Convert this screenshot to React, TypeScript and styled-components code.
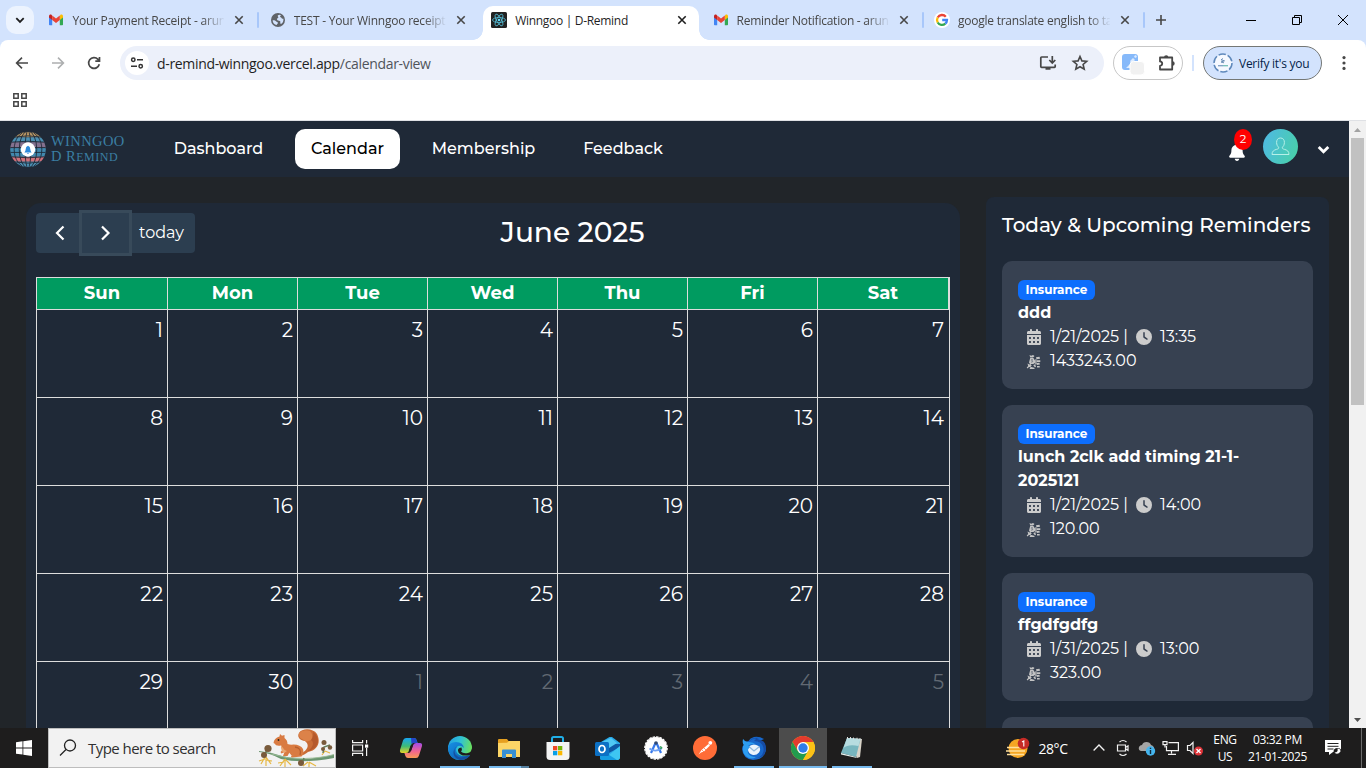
import React from "react";
import styled, { createGlobalStyle, css } from "styled-components";
import { FaBell, FaCalendarDays, FaClock } from "react-icons/fa6";

const GlobalStyle = createGlobalStyle`
  *, *::before, *::after { box-sizing: border-box; }
  body { margin: 0; overflow: hidden; background: #212529; }
  svg { display: block; flex: none; }
`;

const brandFont = `Montserrat, Inter, "Liberation Sans", sans-serif`;
const systemFont = `"Segoe UI", "Open Sans", "Noto Sans", sans-serif`;

const Screen = styled.div`
  width: 1366px;
  height: 768px;
  display: flex;
  flex-direction: column;
  overflow: hidden;
  font-family: ${systemFont};
`;

/* ---------- browser ---------- */

const TabStrip = styled.div`
  height: 40px;
  flex: none;
  background: #d3e3fd;
  display: flex;
  align-items: flex-end;
  padding-left: 6px;
`;

const TabSearch = styled.div`
  width: 28px;
  height: 28px;
  margin: 0 6.4px 6px 0;
  border-radius: 10px;
  background: #ecf3fe;
  display: grid;
  place-items: center;
`;

const Tab = styled.div<{ $active?: boolean }>`
  position: relative;
  width: 215px;
  height: 34px;
  margin-right: 6.4px;
  padding: 0 8px 6px 8px;
  display: flex;
  align-items: center;
  flex: none;
  border-radius: 10px 10px 0 0;
  color: ${(p) => (p.$active ? "#1f1f1f" : "#474747")};
  ${(p) =>
    p.$active &&
    css`
      width: 215.6px;
      margin-right: 5.8px;
      background: #fff;
      &::before, &::after {
        content: "";
        position: absolute;
        bottom: 0;
        width: 10px;
        height: 10px;
      }
      &::before { left: -10px; background: radial-gradient(circle at 0 0, transparent 9.5px, #fff 10px); }
      &::after { right: -10px; background: radial-gradient(circle at 100% 0, transparent 9.5px, #fff 10px); }
    `}
`;

const TabTitle = styled.div<{ $tracking?: number; $fade?: boolean }>`
  width: 152px;
  margin: 1px 7px 0 8px;
  font-size: 12px;
  line-height: 16px;
  white-space: nowrap;
  overflow: hidden;
  letter-spacing: ${(p) => p.$tracking ?? 0}px;
  ${(p) => p.$fade && css`mask-image: linear-gradient(90deg, #000 130px, transparent 153px);`}
`;

const TabDivider = styled.div`
  position: absolute;
  right: -4px;
  top: 6px;
  width: 2px;
  height: 16px;
  border-radius: 1px;
  background: #a8c7fa;
`;

const StripButton = styled.div<{ $w: number }>`
  width: ${(p) => p.$w}px;
  height: 40px;
  display: grid;
  place-items: center;
`;

const WindowButtons = styled.div`
  display: flex;
  margin-left: auto;
`;

const ToolbarBack = styled.div`
  background: #d3e3fd;
  flex: none;
`;

const Toolbar = styled.div`
  height: 46px;
  background: #fff;
  border-radius: 8px 8px 0 0;
  display: flex;
  align-items: center;
  padding-left: 4px;
`;

const NavIcon = styled.div<{ $w?: number }>`
  width: ${(p) => p.$w ?? 36}px;
  display: grid;
  place-items: center;
`;

const AddressBar = styled.div`
  width: 984px;
  flex: none;
  height: 34px;
  margin-left: 8px;
  padding: 0 15px 0 5px;
  border-radius: 17px;
  background: #ecf0fa;
  display: flex;
  align-items: center;
`;

const SiteInfo = styled.div`
  width: 24px;
  height: 24px;
  border-radius: 50%;
  background: #fff;
  display: grid;
  place-items: center;
`;

const Address = styled.div`
  flex: 1;
  margin-left: 8px;
  font-size: 14px;
  letter-spacing: -0.33px;
  color: #1f1f1f;
  span { color: #50545a; }
`;

const AddressActions = styled.div`
  display: flex;
  gap: 14px;
`;

const ExtensionPill = styled.div`
  width: 70px;
  flex: none;
  height: 34px;
  margin-left: 9px;
  padding: 0 6px 0 8px;
  border: 1px solid #c7c7c7;
  border-radius: 17px;
  display: flex;
  align-items: center;
  justify-content: space-between;
`;

const ToolbarDivider = styled.div`
  width: 2px;
  height: 16px;
  margin: 0 9px 0 9px;
  background: #d3e3fd;
`;

const VerifyButton = styled.div`
  width: 119px;
  flex: none;
  height: 34px;
  border: 1px solid #747775;
  border-radius: 17px;
  background: #d3e3fd;
  color: #041e49;
  display: flex;
  align-items: center;
  padding-left: 9px;
  gap: 6px;
  font-size: 12px;
  letter-spacing: -0.27px;
  white-space: nowrap;
`;

const BookmarkBar = styled.div`
  height: 35px;
  flex: none;
  background: #fff;
  border-bottom: 1px solid #dfe1e5;
  padding: 7px 0 0 13px;
`;

/* ---------- web page ---------- */

const Viewport = styled.div`
  height: 607px;
  flex: none;
  display: flex;
  overflow: hidden;
`;

const Page = styled.div`
  width: 1349px;
  height: 607px;
  overflow: hidden;
  background: #212529;
  font-family: ${brandFont};
  color: #fff;
`;

const Header = styled.header`
  height: 56px;
  background: #1f2937;
  display: flex;
  align-items: center;
  padding-left: 10px;
`;

const Brand = styled.div`
  width: 148px;
  display: flex;
  align-items: center;
  gap: 5px;
`;

const BrandName = styled.div`
  font-family: "Liberation Serif", serif;
  font-size: 14.5px;
  line-height: 15px;
  color: #3b7fa3;
  white-space: nowrap;
`;

const BrandLine = styled.div<{ $tracking: number }>`
  letter-spacing: ${(p) => p.$tracking}px;
  small { font-size: 12px; }
`;

const NavLink = styled.div<{ $active?: boolean; $w: number }>`
  width: ${(p) => p.$w}px;
  height: 40px;
  margin-right: 16px;
  padding-bottom: 1px;
  border-radius: 10px;
  display: flex;
  align-items: center;
  justify-content: center;
  white-space: nowrap;
  font-size: 16px;
  font-weight: 500;
  background: ${(p) => (p.$active ? "#fff" : "transparent")};
  color: ${(p) => (p.$active ? "#000" : "#fff")};
`;

const UserTools = styled.div`
  margin-left: auto;
  height: 56px;
  display: flex;
  padding: 8px 19px 0 0;
`;

const BellWrap = styled.div`
  position: relative;
  width: 18px;
  margin: 14px 17px 0 0;
`;

const BellCount = styled.div`
  position: absolute;
  left: 6px;
  top: -14px;
  width: 18px;
  height: 21px;
  border-radius: 50%;
  background: #f00;
  font-size: 11.5px;
  line-height: 21px;
  text-align: center;
`;

const Avatar = styled.div`
  width: 35px;
  height: 35px;
  border-radius: 50%;
  background: linear-gradient(110deg, #4fb8e6, #48d2a4);
  display: grid;
  place-items: center;
  margin-right: 19px;
`;

const MenuArrow = styled.div`
  padding-top: 14px;
`;

const Main = styled.main`
  display: flex;
  align-items: flex-start;
  padding-left: 26px;
`;

const CalendarPanel = styled.section`
  width: 934px;
  height: 700px;
  margin-top: 26px;
  padding: 10px;
  border-radius: 15px;
  background: #1f2937;
`;

const CalendarToolbar = styled.div`
  height: 40px;
  display: grid;
  grid-template-columns: 159px 1fr;
  align-items: center;
`;

const ButtonGroup = styled.div`
  display: flex;
`;

const CalButton = styled.div<{ $w: number; $round?: string; $focused?: boolean }>`
  width: ${(p) => p.$w}px;
  height: 40px;
  padding: 0 1px 1px 0;
  display: flex;
  align-items: center;
  justify-content: center;
  background: #2c3e50;
  border-radius: ${(p) => p.$round ?? "0"};
  font-size: 16px;
  ${(p) => p.$focused && css`position: relative; box-shadow: 0 0 0 3px #384a5a;`}
`;

const MonthTitle = styled.h2`
  margin: 0;
  padding-bottom: 2px;
  text-align: center;
  font-size: 28px;
  font-weight: 500;
  line-height: 34px;
`;

const MonthGrid = styled.div`
  margin-top: 24px;
  display: grid;
  grid-template-columns: 131px repeat(5, 130px) 132px;
  border-left: 1px solid #ddd;
  width: 914px;
`;

const DayName = styled.div`
  height: 33px;
  border: solid #ddd;
  border-width: 1px 1px 1px 0;
  background: #009b60;
  display: flex;
  align-items: center;
  justify-content: center;
  font-size: 18px;
  font-weight: 700;
  padding-bottom: 2px;
  &:nth-child(7) { border-right-width: 2px; }
`;

const DayCell = styled.div<{ $muted?: boolean }>`
  height: 88px;
  border: solid #ddd;
  border-width: 0 1px 1px 0;
  padding: 8px 4px 0 0;
  text-align: right;
  font-size: 20px;
  line-height: 24px;
  color: ${(p) => (p.$muted ? "#626973" : "#fff")};
  &:nth-child(7n) { padding-right: 5px; }
`;

const Reminders = styled.aside`
  width: 343px;
  height: 700px;
  margin: 20px 0 0 26px;
  padding: 16px;
  border-radius: 8px;
  background: #1f2937;
`;

const RemindersTitle = styled.h5`
  margin: 0 0 24px;
  font-size: 20px;
  font-weight: 500;
  line-height: 24px;
  white-space: nowrap;
`;

const ReminderCard = styled.div`
  width: 311px;
  padding: 16px;
  margin-bottom: 16px;
  border-radius: 10px;
  background: #374151;
  font-size: 16px;
  line-height: 24px;
`;

const BadgeLine = styled.div`
  height: 24px;
  padding-top: 3px;
`;

const Badge = styled.div`
  width: 77px;
  height: 20px;
  border-radius: 6px;
  background: #0d6efd;
  font-size: 12px;
  font-weight: 700;
  line-height: 20px;
  text-align: center;
`;

const ReminderName = styled.div`
  font-weight: 700;
  white-space: pre-line;
`;

const ReminderMeta = styled.div`
  height: 24px;
  display: flex;
  align-items: center;
  padding-left: 8px;
  white-space: nowrap;
`;

const MetaIcon = styled.span<{ $left?: number; $low?: boolean }>`
  width: 16px;
  margin: ${(p) => (p.$low ? 2 : 0)}px 8px 0 ${(p) => p.$left ?? 0}px;
  display: grid;
  place-items: center;
  color: #ccc;
`;

const Scrollbar = styled.div`
  width: 17px;
  background: #f1f1f1;
  display: flex;
  flex-direction: column;
  align-items: center;
`;

const ScrollArrow = styled.div`
  height: 17px;
  display: grid;
  place-items: center;
`;

const ScrollThumb = styled.div`
  width: 13px;
  height: 267px;
  background: #c1c1c1;
  margin-bottom: auto;
`;

/* ---------- taskbar ---------- */

const Taskbar = styled.div`
  height: 40px;
  flex: none;
  background: #1e1d1d;
  display: flex;
  color: #fff;
`;

const TaskSlot = styled.div<{ $w?: number; $active?: boolean; $ml?: number }>`
  position: relative;
  width: ${(p) => p.$w ?? 48}px;
  height: 40px;
  margin-left: ${(p) => p.$ml ?? 0}px;
  display: grid;
  place-items: center;
  background: ${(p) => (p.$active ? "#4c4c4c" : "transparent")};
`;

const RunningBar = styled.div<{ $w?: number; $split?: boolean }>`
  position: absolute;
  bottom: 0;
  left: 50%;
  width: ${(p) => p.$w ?? 40}px;
  height: 2px;
  transform: translateX(-50%);
  background: ${(p) => (p.$split ? "linear-gradient(90deg, #76b9ed 32px, #557f9e 32px)" : "#76b9ed")};
`;

const SearchBox = styled.div`
  width: 288px;
  height: 40px;
  border: 1px solid #bdbdbd;
  background: #f2f2f2;
  color: #303030;
  display: flex;
  align-items: center;
  padding-left: 10px;
  overflow: hidden;
`;

const SearchText = styled.div`
  flex: 1;
  margin-left: 11px;
  font-size: 15px;
  letter-spacing: -0.54px;
  white-space: nowrap;
`;

const Tray = styled.div`
  margin-left: auto;
  display: flex;
  align-items: center;
`;

const TrayText = styled.div<{ $w: number; $size?: number; $tracking?: number }>`
  width: ${(p) => p.$w}px;
  text-align: center;
  font-size: ${(p) => p.$size ?? 12}px;
  line-height: 17px;
  letter-spacing: ${(p) => p.$tracking ?? -0.37}px;
  white-space: nowrap;
`;

const ShowDesktop = styled.div`
  width: 5px;
  height: 40px;
  margin-left: 7px;
  border-left: 1px solid #6b6b6b;
`;

/* ---------- icons ---------- */

const GmailIcon = () => (
  <svg width="16" height="16" viewBox="0 0 16 16">
    <path d="M1 4.2V12.5q0 .8.8.8H4.2V7z" fill="#4285f4" />
    <path d="M15 4.2V12.5q0 .8-.8.8H11.8V7z" fill="#34a853" />
    <path d="M11.8 4v4L15 5.6V4.2C15 2.6 13.3 2.2 12.3 3z" fill="#fbbc04" />
    <path d="M4.2 4v4L1 5.6V4.2C1 2.6 2.7 2.2 3.7 3z" fill="#c5221f" />
    <path d="M4.2 3.4L8 6.4l3.8-3V8L8 10.9 4.2 8z" fill="#ea4335" />
  </svg>
);

const GlobeIcon = () => (
  <svg width="16" height="16" viewBox="0 0 16 16">
    <circle cx="8" cy="8" r="7" fill="#5f6368" />
    <path d="M2.6 8.3c1.7-.1 3 .3 3.6 1.2.4.7 1.6.3 1.7 1.4 0 .9-1.2.8-1.2 2.2-2.4-.4-4-2.3-4.1-4.8zM8 3.2c1-.8 2.4-.7 3.3 0-.7.5-1.2.6-1.2 1.3 0 .8 1 .6 1.3 1.3.3.9 1.3 1 2 .9.3 2.1-.6 4-2 5.1-.8.3-1.4-.4-1.1-1.3.3-1-.2-1.6-1.3-1.7C7.600 8.700 7 8.200 7 7.300 7 6 8.600 6.200 8.300 5.100 8.100 4.500 7.300 4 8 3.200z" fill="#d3e3fd" />
  </svg>
);

const ReactIcon = () => (
  <svg width="16" height="16" viewBox="0 0 16 16">
    <rect width="16" height="16" rx="1.5" fill="#222" />
    <g fill="none" stroke="#55bfd8" strokeWidth=".8">
      <ellipse cx="8" cy="8" rx="6.5" ry="2.5" />
      <ellipse cx="8" cy="8" rx="6.5" ry="2.5" transform="rotate(60 8 8)" />
      <ellipse cx="8" cy="8" rx="6.5" ry="2.5" transform="rotate(120 8 8)" />
    </g>
    <circle cx="8" cy="8" r="1.3" fill="#61dafb" />
  </svg>
);

const GoogleIcon = () => (
  <svg width="16" height="16" viewBox="0 0 16 16">
    <circle cx="8" cy="8" r="8" fill="#fff" />
    <g fill="none" strokeWidth="2.3">
      <path d="M11.800 4.700A5 5 0 0 0 3.700 5.500" stroke="#ea4335" />
      <path d="M3.700 5.500a5 5 0 0 0 0 5" stroke="#fbbc05" />
      <path d="M3.700 10.500a5 5 0 0 0 7.600 1.200" stroke="#34a853" />
      <path d="M11.300 11.700A5 5 0 0 0 13 8H8.200" stroke="#4285f4" />
    </g>
  </svg>
);

const CloseGlyph = ({ dark }: { dark?: boolean }) => (
  <svg width="16" height="16" viewBox="0 0 16 16" stroke={dark ? "#1f1f1f" : "#474747"} strokeWidth="1.6">
    <path d="M4.300 4.300l7.400 7.400M11.700 4.300l-7.400 7.400" />
  </svg>
);

const BackArrow = ({ flip }: { flip?: boolean }) => (
  <svg width="16" height="16" viewBox="0 0 16 16" fill="none" stroke={flip ? "#adafb0" : "#474747"} strokeWidth="1.6" transform={flip ? "scale(-1 1)" : undefined}>
    <path d="M14 8H3M8 2.600L2.600 8 8 13.400" />
  </svg>
);

const ReloadIcon = () => (
  <svg width="16" height="16" viewBox="0 0 16 16" fill="none" stroke="#474747" strokeWidth="1.7">
    <path d="M13.300 9.300A5.400 5.400 0 1 1 12 4.300l1.500 1.600M13.500 2v4.200H9.300" />
  </svg>
);

const TuneIcon = () => (
  <svg width="14" height="14" viewBox="0 0 14 14" fill="none" stroke="#333" strokeWidth="1.500">
    <circle cx="3.300" cy="3.800" r="1.700" />
    <path d="M7 3.800h6M1 10.200h6" />
    <circle cx="10.700" cy="10.200" r="1.700" />
  </svg>
);

const InstallIcon = () => (
  <svg width="18" height="18" viewBox="0 0 18 18" fill="none" stroke="#474747" strokeWidth="1.700">
    <path d="M9 3H2.600Q1.800 3 1.800 3.800V12.500q0 .8.8.8H15.400q.8 0 .8-.8V10.500M6.500 15h5M13.300 2v6.500M10.300 6l3 3 3-3" />
  </svg>
);

const StarIcon = () => (
  <svg width="18" height="18" viewBox="0 0 18 18" fill="none" stroke="#474747" strokeWidth="1.600">
    <path d="M9 2.500l1.900 4.400 4.800.4-3.600 3.200 1.100 4.700L9 12.700l-4.200 2.500 1.100-4.700L2.300 7.300l4.800-.4z" />
  </svg>
);

const ExtensionApp = () => (
  <svg width="24" height="24" viewBox="0 0 24 24">
    <rect x="0" y="3" width="16" height="16" rx="3" fill="#86b9fa" />
    <path d="M4 17l5-5-1-2 3-3 2 2-3 3 2 5zM12 5l2-1 1 2-2 1z" fill="#dcebff" />
    <rect x="8" y="10.500" width="14.500" height="13.500" rx="3.500" fill="#f1f1f1" stroke="#fff" />
  </svg>
);

const PuzzleIcon = () => (
  <svg width="18" height="18" viewBox="0 0 18 18">
    <path d="M2 3.500h12.200v12H2v-3.700q2.200-.2 2.200-2.200T2 7.400z" fill="none" stroke="#474747" strokeWidth="1.800" strokeLinejoin="round" />
    <path d="M6 3.500a2.200 2.200 0 0 1 4.400 0zM14.500 7.300a2.200 2.200 0 0 1 0 4.400z" fill="#474747" />
  </svg>
);

const ProfileRing = () => (
  <svg width="20" height="20" viewBox="0 0 20 20">
    <circle cx="10" cy="10" r="9" fill="#f6f9ff" stroke="#5f89bc" strokeWidth="1.500" strokeDasharray="7.400 2" />
    <path d="M10 5.500l-2 1.300 3.500 1-3.500 1.200 3 .8" fill="none" stroke="#6e91b8" />
    <path d="M5 12.700h5" stroke="#7f9fc4" strokeWidth="1.300" /><path d="M10 12.700h5" stroke="#74bfb6" strokeWidth="1.300" />
  </svg>
);

const AppsGrid = () => (
  <svg width="14" height="14" viewBox="0 0 14 14" fill="none" stroke="#474747" strokeWidth="1.500">
    <path d="M.8.800h4.400v4.400H.8zM8.800.800h4.400v4.400H8.800zM.8 8.800h4.400v4.400H.8zM8.800 8.800h4.400v4.400H8.800z" />
  </svg>
);

const GlobeLogo = () => (
  <svg width="36" height="37" viewBox="0 0 37 37">
    <clipPath id="ball"><circle cx="18.500" cy="18.500" r="18.300" /></clipPath>
    <g clipPath="url(#ball)">
      <rect width="37" height="6" fill="#b99663" />
      <rect y="6" width="37" height="5" fill="#4c90b3" />
      <rect y="11" width="37" height="6" fill="#84718f" />
      <rect y="17" width="37" height="9" fill="#4289ae" />
      <rect y="26" width="37" height="5" fill="#cf717b" />
      <rect y="31" width="37" height="6" fill="#4c90b3" />
      <g fill="none" stroke="#1f2937" strokeWidth=".9">
        <path d="M0 6q18.500-3 37 0M0 11q18.500-2 37 0M0 16.500h37M0 21.500h37M0 26q18.500 2 37 0M0 31q18.500 3 37 0" />
        <ellipse cx="18.500" cy="18.500" rx="3" ry="19" />
        <ellipse cx="18.500" cy="18.500" rx="9" ry="19" />
        <ellipse cx="18.500" cy="18.500" rx="14.200" ry="19" />
      </g>
    </g>
    <circle cx="18.500" cy="18.500" r="7.400" fill="#fff" />
    <path d="M14.800 21.500q1.300-1.200 1.300-3.300 0-2.900 2.400-3.600 2.400.7 2.400 3.600 0 2.100 1.300 3.300zM17.300 22h2.400l-1.200 1.200z" fill="#2e8bdc" />
  </svg>
);

const AvatarFigure = () => (
  <svg width="19" height="19" viewBox="0 0 19 19" fill="none" stroke="#b6f0e8" strokeWidth="1">
    <path d="M9.500 1C6.900 1 5.600 2.900 5.600 5.400c0 2.200 1 4.400 2.200 5-.1 1.300-.6 1.500-2.100 1.900C2.900 13 1 14.300 1 17.500h17c0-3.200-1.900-4.500-4.700-5.200-1.500-.4-2-.6-2.100-1.900 1.200-.6 2.200-2.800 2.200-5C13.400 2.900 12.100 1 9.500 1z" />
  </svg>
);

const HeaderChevron = () => (
  <svg width="13" height="13" viewBox="0 0 13 13" fill="none" stroke="#fff" strokeWidth="2.800">
    <path d="M1.700 4l4.800 4.800L11.300 4" />
  </svg>
);

const CalChevron = ({ right }: { right?: boolean }) => (
  <svg width="12" height="16" viewBox="0 0 12 16" fill="none" stroke="#fff" strokeWidth="2.200">
    <path d={right ? "M3 1.500L9.500 8 3 14.500" : "M10.500 1.500L4 8 10.500 14.500"} />
  </svg>
);

const MoneyIcon = () => (
  <svg width="16" height="16" viewBox="0 0 16 16">
    <g fill="#c4c4c4">
      <path d="M3.500 1l1.700.8L7 1l1.500 1-1.500 1.400H4.200zM4.200 4h3.200q2.400 2.500 1.600 5L7.300 10H4L3 8.500z" />
      <path d="M10 3.200l3.500-.4.500 2-3.500.4zM10.700 6.200h3.600v1.700h-3.600zM10.400 9l3-.3.500 1.700-3 .5zM11 12h2.700v1.500H11z" />
      <path d="M1.500 9.500l2 1 1.200-.5 1 1.500-1.300 1.200 4.600 1.300-1 1H3.500l1-1.700-1.500-.2-1.500 1.400-.8-1 1.500-1.500z" />
      <path d="M7.300 11l2-.8.7 3-1.700-.5zM9.300 5.300h1.200v5H9.300z" />
    </g>
    <path d="M6.700 5.700q-1.300-.6-1.400.5 1.800.4 1.400 1.500-.8.900-1.700.1" fill="none" stroke="#596271" strokeWidth=".7" />
  </svg>
);

const Squirrel = () => (
  <svg width="78" height="38" viewBox="0 0 78 38">
    <path d="M2 22q12 1 23 5 22 6 52-1.500v3.500q-32 6-53 1Q13 24 2 23z" fill="#6b9670" />
    <path d="M14 25q16 5 33 4.500 18-.5 30-4" fill="none" stroke="#9dbd98" strokeWidth=".9" />
    <g stroke="#e6b844" strokeWidth="1.200" fill="none">
      <path d="M8 28l-4 7M9 28v9M9 28l5 7M8 30l-6 2M9 31l6 1M28 30l-5 7M28 30v8M28 30l6 6M27 33l-6 1M51 33l-5 4M52 33v5M52 33l7 4M68 22l-3 4M68 22l5 2" />
    </g>
    <path d="M8 25l3-7M66 24l1-6 6-2M47 29l-2 6" stroke="#65805c" strokeWidth="1.500" fill="none" />
    <g fill="#795b3c"><circle cx="11" cy="19.500" r="3.600" /><circle cx="7" cy="26" r="3" /><circle cx="44" cy="34" r="3" /><circle cx="67" cy="13.500" r="2.500" /><circle cx="73" cy="18.500" r="2.200" /><circle cx="66" cy="20" r="2" /></g>
    <path d="M42 26C49 22 54 17 48 12 42 11 40 7 42 4 45-1 56-1 60 5c4 8 1 16-9 18-3 2-5 4-8 3z" fill="#c96c36" />
    <path d="M50 11q6-1 6 4-1 5-6 7 9-1 11-9 0-7-5-10 2 7-6 8z" fill="#a94c26" opacity=".6" />
    <path d="M42 4q4-4 11-2 4 4 1 9-5 3-8-.5Q41 9 42 4z" fill="#dc8249" />
    <path d="M16.500 14q.5-5 6-6.500l.5-2.500 2 1.800L27.500 6v3q3 2 3 6 3 1 6 .5 7 0 9.500 4.500 1.500 5-1.500 7.500l-10 1-.5-1.500 4-1.500-4.500-4-3 5.500-4.500 0 1.500-4-3 1.500-1-1.500 3-3q-2-2-2.500-3.500-5 1-6.500-2z" fill="#d97b42" />
    <path d="M29 20l7 1 3 5-4 1z" fill="#d97b42" />
    <path d="M24 16q2 5 6 6l-3 2q-3-2-3-5z" fill="#e9a873" />
    <path d="M38 18q7 1 5 8" fill="none" stroke="#b85f2e" strokeWidth="1.300" />
    <circle cx="21.500" cy="11" r=".9" fill="#292018" />
  </svg>
);

const CopilotIcon = () => (
  <svg width="24" height="24" viewBox="0 0 24 24">
    <defs>
      <linearGradient id="cpA" x1="0" y1="0" x2="0" y2="1"><stop stopColor="#18a5f2" /><stop offset=".55" stopColor="#3ebb75" /><stop offset="1" stopColor="#e9d228" /></linearGradient>
      <linearGradient id="cpB" x1="0" y1="0" x2="0" y2="1"><stop stopColor="#a24be8" /><stop offset=".55" stopColor="#f26591" /><stop offset="1" stopColor="#f99a54" /></linearGradient>
    </defs>
    <path d="M7 2h8q2 0 2.600 2l1 3h-4q-2 0-2.500 2L10 14.500Q9.500 17 7 17H3Q.5 17 1 14L4 4.500Q4.700 2 7 2z" fill="url(#cpA)" />
    <path d="M12 2h3q2 0 2.600 2l1 3h-4q-1.500 0-2.100 1z" fill="#2445c7" />
    <path d="M17 22H9q-2 0-2.600-2l-1-3h4q2 0 2.500-2L14 9.500Q14.500 7 17 7h4q2.500 0 2 3L20 19.500Q19.300 22 17 22z" fill="url(#cpB)" />
    <path d="M11.500 9.500h2.400l-1.700 5.200H9.900z" fill="#1e1d1d" />
  </svg>
);

const EdgeIcon = () => (
  <svg width="24" height="24" viewBox="0 0 24 24">
    <defs>
      <linearGradient id="edA" x1="0" x2="1" y2=".3"><stop stopColor="#229be5" /><stop offset=".55" stopColor="#31c3d2" /><stop offset="1" stopColor="#67df63" /></linearGradient>
      <linearGradient id="edB" x1="0" x2="1" y2="1"><stop stopColor="#1791e5" /><stop offset="1" stopColor="#0b58ad" /></linearGradient>
    </defs>
    <circle cx="12" cy="12" r="12" fill="url(#edA)" />
    <path d="M0 12q1-6 8-6 7 .2 8 6-3-3-6-2-3 2-1.500 6 3 6 13.500 3-4 5-10 5Q1 24 0 12z" fill="url(#edB)" />
    <path d="M13.500 11.500q1 2-.5 4 2 2.500 7 1.500 3-.5 4-4.500V20l-2.500-1q-8 2-11-2.500-2-4.500 3-5z" fill="#1e1d1d" />
    <path d="M9 10.500q-4 3-1.500 8 4 5.500 13 .7l1.500.5q-4 4.500-10 4.300Q5 22 5.500 16q.5-4 3.500-5.500z" fill="#1550a0" />
  </svg>
);

const FolderIcon = () => (
  <svg width="22" height="19" viewBox="0 0 22 19">
    <path d="M0 1q0-1 1-1h8l1.500 2H21q1 0 1 1v15H0z" fill="#e6a020" />
    <path d="M0 4l9-.2L11 2h11v16H0z" fill="#fcd566" />
    <path d="M4 11.500q0-1 1-1h12q1 0 1 1V19h-4v-4H8v4H4z" fill="#378fd3" />
  </svg>
);

const StoreIcon = () => (
  <svg width="24" height="24" viewBox="0 0 24 24">
    <path d="M6 7V2.500Q6 1 7.500 1h8Q17 1 17 2.500V7" fill="none" stroke="#20aee6" strokeWidth="2" />
    <path d="M.5 6h23v14.500q0 3.500-3.500 3.500H4Q.5 24 .5 20.500z" fill="#f4f4f4" />
    <path d="M7 10h4.300v4.300H7z" fill="#f04a24" /><path d="M12 10h4.300v4.300H12z" fill="#75b709" />
    <path d="M7 15h4.300v4.300H7z" fill="#08a0e8" /><path d="M12 15h4.300v4.300H12z" fill="#fbb700" />
  </svg>
);

const OutlookIcon = () => (
  <svg width="25" height="23" viewBox="0 0 25 23">
    <path d="M6 5l8.500-5Q16-.4 17 0l8 6v14q0 3-3 3H7q-2 0-2-2z" fill="#28a8e8" />
    <path d="M5 7h20v3L14 16 5 12z" fill="#0d58a5" /><path d="M7 5L16 1l6 5-8 5z" fill="#4fc8f3" />
    <path d="M25 9v11q0 3-3 3H8z" fill="#3ec6f2" /><path d="M5 12l17 11H7q-2 0-2-2z" fill="#159ce2" />
    <rect y="5" width="14" height="14" rx="1.500" fill="#0c70c4" />
    <ellipse cx="7" cy="12" rx="3" ry="3.500" fill="none" stroke="#fff" strokeWidth="1.700" />
  </svg>
);

const StudioIcon = () => (
  <svg width="24" height="24" viewBox="0 0 24 24">
    <circle cx="12" cy="12" r="11" fill="#fff" /><circle cx="12" cy="12" r="11.200" fill="none" stroke="#fff" strokeWidth="1.300" strokeDasharray="2.500 1" />
    <path d="M11.500 7L7 17M12.500 7l4.500 10" fill="none" stroke="#3778ea" strokeWidth="2.200" />
    <path d="M5.500 12.500q6 4.500 12.500-.5" fill="none" stroke="#6da0f4" strokeWidth="1.800" />
    <circle cx="12" cy="7" r="1.800" fill="#334b72" /><path d="M16 10.500l1.500 1-1 1.500" stroke="#38a35b" strokeWidth="1.500" fill="none" />
  </svg>
);

const PostmanIcon = () => (
  <svg width="24" height="24" viewBox="0 0 24 24">
    <circle cx="12" cy="12" r="12" fill="#ff6c37" />
    <path d="M5.500 18.500l3-4.500 7-6 1.500 1.500-6 6-3 1z" fill="#fff" /><circle cx="17.300" cy="6.800" r="1.900" fill="#fff" />
    <path d="M9 14l2 2M11 12l2 2" stroke="#ff6c37" strokeWidth=".7" />
  </svg>
);

const ThunderbirdIcon = () => (
  <svg width="24" height="24" viewBox="0 0 24 24">
    <path d="M1 6q0 2 1 3-2 1-2 4 1 10 11 11 11 0 13-10 0-4-2-7l-1 1q-1-2-3-3l4-2q-5-3-10-2-4 1-5.500 4Q2 7 1 3z" fill="#1768cc" />
    <path d="M7 6q3-5 10-4-4 1-5 3 8 0 9.500 7 1 7-6 10 8-1 8.500-9Q24 5 18 4q-6-3-9 0z" fill="#164ca5" />
    <path d="M7.500 10q4.500-3 9 0 3 3 .5 6.500-2.500 3-6 2.500-4.500-1-5-5 0-2.500 1.500-4z" fill="#eaf3fc" />
    <path d="M7.500 11l4.500 4 5.500-4.500" fill="none" stroke="#91b8dd" strokeWidth="1.200" />
    <path d="M1 3q2 3 6 3 4 0 7 2.500-5-1.500-8 1.500 2 0 2 1-3 2-2 6 2 4 8 4-4 3-9 0Q0 18 1 10L2 9Q0 7 1 3z" fill="#2d9df0" />
  </svg>
);

const ChromeIcon = () => (
  <svg width="24" height="24" viewBox="0 0 24 24">
    <circle cx="12" cy="12" r="12" fill="#fbc116" />
    <path d="M1.600 6A12 12 0 0 1 22.400 6H12l-5.200 9z" fill="#e33b2e" />
    <path d="M1.600 6A12 12 0 0 0 12 24l5.200-9L12 17.500 6.800 15z" fill="#229b4e" />
    <path d="M12 6h10.400A12 12 0 0 1 12 24l5.200-9z" fill="#fbc116" />
    <circle cx="12" cy="12" r="6" fill="#fff" /><circle cx="12" cy="12" r="4.700" fill="#2f7de8" />
  </svg>
);

const NotepadIcon = () => (
  <svg width="24" height="24" viewBox="0 0 24 24">
    <path d="M7 2l15 1-2 18-3 1z" fill="#d8d3c8" />
    <path d="M7 2l13.500 1L16 21 1 17z" fill="#78b6bf" /><path d="M7 2l13.500 1-2 7Q8 8 3.500 12z" fill="#b7dce0" />
    <path d="M7.500 1v2M10.500 1v2M13.500 1.500v2M17 1.700v2M20 2v2" stroke="#ddd" />
    <path d="M1 17l15 4 1 1L1 18.500z" fill="#e7f2ef" />
  </svg>
);

const WeatherIcon = () => (
  <svg width="26" height="22" viewBox="0 0 26 22">
    <circle cx="12" cy="11.500" r="9.500" fill="#f5a623" />
    <path d="M1 10.500h18M0 14h19M1 17.500h17" stroke="#ffe09a" strokeWidth="1.500" />
    <circle cx="17.500" cy="6.500" r="5.800" fill="#c62b26" /><path d="M16 5L17.800 4V9.500" fill="none" stroke="#fff" strokeWidth="1.100" />
  </svg>
);

const MeetIcon = () => (
  <svg width="14" height="18" viewBox="0 0 14 18" fill="none" stroke="#f2f2f2" strokeWidth="1.200">
    <path d="M3.500 3q3.500-3 7 0M3.500 15q3.500 3 7 0M1.500 6h8v6h-8zM9.500 8.500L12 6.800v4.500L9.500 9.700" />
  </svg>
);

const CloudIcon = () => (
  <svg width="18" height="18" viewBox="0 0 18 18">
    <path d="M3 12q-3-1-2-4 1-2 3-2 1-3 4.500-3Q12 3 13 6q4 1 3 6z" fill="#a5a5a5" />
    <circle cx="12.500" cy="12" r="4.700" fill="#45b5ee" /><path d="M12.500 11v4M12.500 8.800v1.300" stroke="#102a3b" strokeWidth="1.400" />
  </svg>
);

const NetworkIcon = () => (
  <svg width="18" height="16" viewBox="0 0 18 16" fill="none" stroke="#f2f2f2" strokeWidth="1.200">
    <path d="M6.500 2.600H16.400v8H4.500V6M9.500 10.600v3M6 14.400h8M1 1.600h4v3H1zM3 4.600v3" />
  </svg>
);

const VolumeIcon = () => (
  <svg width="18" height="18" viewBox="0 0 18 18">
    <path d="M1.500 6.500H4L7 3.500v11L4 11.500H1.500z" fill="none" stroke="#f2f2f2" strokeWidth="1.200" />
    <circle cx="12.500" cy="12" r="4.500" fill="#de3338" /><path d="M10.500 10l4 4M14.500 10l-4 4" stroke="#fff" strokeWidth="1.300" />
  </svg>
);

const NotificationIcon = () => (
  <svg width="18" height="18" viewBox="0 0 18 18">
    <path d="M1 1h16v12H9l-4 3v-3H1z" fill="#fff" /><path d="M3.500 4.500h11M3.500 7.300h11M3.500 10h6" stroke="#222" />
    <circle cx="13.500" cy="13" r="4" fill="#1e1d1d" /><path d="M10.500 13.500q3 3 6-1 0-3-3-3 1 4-3 4z" fill="#fff" />
  </svg>
);

/* ---------- data ---------- */

const tabs = [
  { title: "Your Payment Receipt - arun", icon: <GmailIcon />, divider: true, tracking: -0.22 },
  { title: "TEST - Your Winngoo receipt", icon: <GlobeIcon />, tracking: -0.22 },
  { title: "Winngoo | D-Remind", icon: <ReactIcon />, active: true, tracking: -0.3 },
  { title: "Reminder Notification - arun", icon: <GmailIcon />, divider: true, tracking: -0.25 },
  { title: "google translate english to ta", icon: <GoogleIcon />, divider: true, tracking: -0.24 },
];

const navItems = [
  { label: "Dashboard", w: 121 },
  { label: "Calendar", w: 105, active: true },
  { label: "Membership", w: 135 },
  { label: "Feedback", w: 112 },
];

const dayNames = ["Sun", "Mon", "Tue", "Wed", "Thu", "Fri", "Sat"];
const days = Array.from({ length: 35 }, (_, i) => ({ day: i < 30 ? i + 1 : i - 29, muted: i >= 30 }));

const reminders = [
  { name: "ddd", date: "1/21/2025 |", time: "13:35", amount: "1433243.00" },
  { name: "lunch 2clk add timing 21-1-\n2025121", date: "1/21/2025 |", time: "14:00", amount: "120.00" },
  { name: "ffgdfgdfg", date: "1/31/2025 |", time: "13:00", amount: "323.00" },
];

export default function App() {
  return (
    <Screen>
      <GlobalStyle />
      <TabStrip>
        <TabSearch>
          <svg width="12" height="12" viewBox="0 0 12 12" fill="none" stroke="#1f1f1f" strokeWidth="1.800"><path d="M2.300 4.200L6 7.900l3.700-3.700" /></svg>
        </TabSearch>
        {tabs.map((t) => (
          <Tab key={t.title} $active={t.active}>
            {t.icon}
            <TabTitle $fade={!t.active} $tracking={t.tracking}>{t.title}</TabTitle>
            <CloseGlyph dark={t.active} />
            {t.divider && <TabDivider />}
          </Tab>
        ))}
        <StripButton $w={27}>
          <svg width="12" height="12" viewBox="0 0 12 12" stroke="#474747" strokeWidth="1.600"><path d="M6 1v10M1 6h10" /></svg>
        </StripButton>
        <WindowButtons>
          <StripButton $w={46}><svg width="10" height="10" viewBox="0 0 10 10"><path d="M0 5.500h10" stroke="#000" /></svg></StripButton>
          <StripButton $w={46}><svg width="10" height="10" viewBox="0 0 10 10" fill="none" stroke="#000"><path d="M.5 2.500h7v7h-7zM2.500 2.500v-2h7v7h-2" /></svg></StripButton>
          <StripButton $w={46}><svg width="10" height="10" viewBox="0 0 10 10" stroke="#000"><path d="M0 0l10 10M10 0L0 10" /></svg></StripButton>
        </WindowButtons>
      </TabStrip>

      <ToolbarBack>
        <Toolbar>
          <NavIcon><BackArrow /></NavIcon>
          <NavIcon><BackArrow flip /></NavIcon>
          <NavIcon><ReloadIcon /></NavIcon>
          <AddressBar>
            <SiteInfo><TuneIcon /></SiteInfo>
            <Address>d-remind-winngoo.vercel.app<span>/calendar-view</span></Address>
            <AddressActions><InstallIcon /><StarIcon /></AddressActions>
          </AddressBar>
          <ExtensionPill><ExtensionApp /><PuzzleIcon /></ExtensionPill>
          <ToolbarDivider />
          <VerifyButton><ProfileRing />Verify it's you</VerifyButton>
          <NavIcon $w={44}>
            <svg width="4" height="16" viewBox="0 0 4 16" fill="#474747"><circle cx="2" cy="2.600" r="1.600" /><circle cx="2" cy="8" r="1.600" /><circle cx="2" cy="13.400" r="1.600" /></svg>
          </NavIcon>
        </Toolbar>
      </ToolbarBack>
      <BookmarkBar><AppsGrid /></BookmarkBar>

      <Viewport>
        <Page>
          <Header>
            <Brand>
              <GlobeLogo />
              <BrandName>
                <BrandLine $tracking={0.4}>WINNGOO</BrandLine>
                <BrandLine $tracking={0.5}>D R<small>EMIND</small></BrandLine>
              </BrandName>
            </Brand>
            {navItems.map((n) => (
              <NavLink key={n.label} $active={n.active} $w={n.w}>{n.label}</NavLink>
            ))}
            <UserTools>
              <BellWrap><FaBell size={18} /><BellCount>2</BellCount></BellWrap>
              <Avatar><AvatarFigure /></Avatar>
              <MenuArrow><HeaderChevron /></MenuArrow>
            </UserTools>
          </Header>
          <Main>
            <CalendarPanel>
              <CalendarToolbar>
                <ButtonGroup>
                  <CalButton $w={46} $round="4px 0 0 4px"><CalChevron /></CalButton>
                  <CalButton $w={47} $focused><CalChevron right /></CalButton>
                  <CalButton $w={66} $round="0 4px 4px 0">today</CalButton>
                </ButtonGroup>
                <MonthTitle>June 2025</MonthTitle>
              </CalendarToolbar>
              <MonthGrid>
                {dayNames.map((d) => <DayName key={d}>{d}</DayName>)}
                {days.map((d, i) => <DayCell key={i} $muted={d.muted}>{d.day}</DayCell>)}
              </MonthGrid>
            </CalendarPanel>
            <Reminders>
              <RemindersTitle>Today &amp; Upcoming Reminders</RemindersTitle>
              {reminders.map((r) => (
                <ReminderCard key={r.name}>
                  <BadgeLine><Badge>Insurance</Badge></BadgeLine>
                  <ReminderName>{r.name}</ReminderName>
                  <ReminderMeta>
                    <MetaIcon><FaCalendarDays size={16} /></MetaIcon>{r.date}
                    <MetaIcon $left={8}><FaClock size={16} /></MetaIcon>{r.time}
                  </ReminderMeta>
                  <ReminderMeta><MetaIcon $low><MoneyIcon /></MetaIcon>{r.amount}</ReminderMeta>
                </ReminderCard>
              ))}
              <ReminderCard />
            </Reminders>
          </Main>
        </Page>
        <Scrollbar>
          <ScrollArrow><svg width="7" height="4" viewBox="0 0 7 4"><path d="M0 4l3.500-4L7 4z" fill="#a3a3a3" /></svg></ScrollArrow>
          <ScrollThumb />
          <ScrollArrow><svg width="7" height="4" viewBox="0 0 7 4"><path d="M0 0l3.500 4L7 0z" fill="#505050" /></svg></ScrollArrow>
        </Scrollbar>
      </Viewport>

      <Taskbar>
        <TaskSlot>
          <svg width="16" height="16" viewBox="0 0 16 16" fill="#fff"><path d="M0 2.200l6.500-.9v6.200H0zM7.300 1.200L16 0v7.500H7.300zM0 8.400h6.500v6.200L0 13.700zM7.300 8.400H16V16l-8.700-1.300z" /></svg>
        </TaskSlot>
        <SearchBox>
          <svg width="18" height="18" viewBox="0 0 18 18" fill="none" stroke="#222" strokeWidth="1.300"><circle cx="11" cy="6.500" r="5.500" /><path d="M7 10.500L1 16.500" /></svg>
          <SearchText>Type here to search</SearchText>
          <Squirrel />
        </SearchBox>
        <TaskSlot>
          <svg width="17" height="16" viewBox="0 0 17 16" fill="none" stroke="#f2f2f2" strokeWidth="1.200"><path d="M.6 0v2.600h10V0M.6 5h10v6h-10zM.6 16v-2.600h10V16M14.600 0v3.500M14.600 8v8" /><path d="M13 4.500h3.200v3.200H13z" fill="#fff" stroke="none" /></svg>
        </TaskSlot>
        <TaskSlot $ml={3}><CopilotIcon /></TaskSlot>
        <TaskSlot $ml={1}><EdgeIcon /><RunningBar /></TaskSlot>
        <TaskSlot $ml={1}><FolderIcon /><RunningBar $split /></TaskSlot>
        <TaskSlot $ml={1}><StoreIcon /></TaskSlot>
        <TaskSlot $ml={1}><OutlookIcon /></TaskSlot>
        <TaskSlot $ml={1}><StudioIcon /></TaskSlot>
        <TaskSlot $ml={1}><PostmanIcon /></TaskSlot>
        <TaskSlot $ml={1}><ThunderbirdIcon /><RunningBar /></TaskSlot>
        <TaskSlot $ml={1} $active><ChromeIcon /><RunningBar $w={48} /></TaskSlot>
        <TaskSlot $ml={1}><NotepadIcon /><RunningBar /></TaskSlot>
        <Tray>
          <WeatherIcon />
          <TrayText $w={42} $size={14} $tracking={-0.4}>28°C</TrayText>
          <TaskSlot $w={24} $ml={13}><svg width="12" height="8" viewBox="0 0 12 8" fill="none" stroke="#f2f2f2" strokeWidth="1.300"><path d="M.6 6.500L6 1l5.400 5.500" /></svg></TaskSlot>
          <TaskSlot $w={24}><MeetIcon /></TaskSlot>
          <TaskSlot $w={24}><CloudIcon /></TaskSlot>
          <TaskSlot $w={24}><NetworkIcon /></TaskSlot>
          <TaskSlot $w={24}><VolumeIcon /></TaskSlot>
          <TrayText $w={36}>ENG<br />US</TrayText>
          <TrayText $w={69}>03:32 PM<br />21-01-2025</TrayText>
          <TaskSlot $w={42}><NotificationIcon /></TaskSlot>
          <ShowDesktop />
        </Tray>
      </Taskbar>
    </Screen>
  );
}
